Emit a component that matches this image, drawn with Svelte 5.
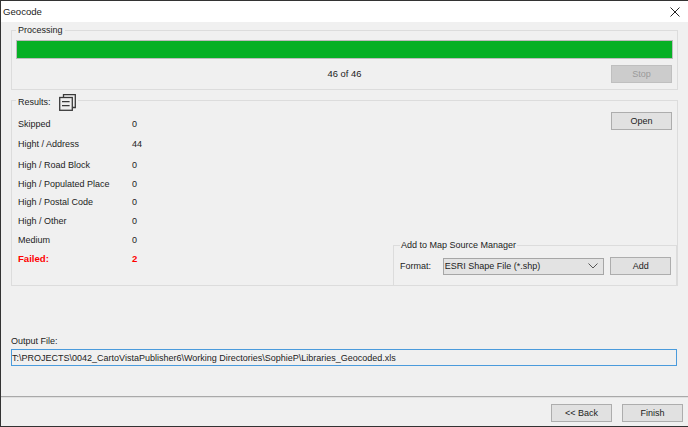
<script>
  const rows = [
    ['Skipped', '0'],
    ['Hight / Address', '44'],
    ['High / Road Block', '0'],
    ['High / Populated Place', '0'],
    ['High / Postal Code', '0'],
    ['High / Other', '0'],
    ['Medium', '0'],
  ];
</script>

<div class="window">
  <header class="titlebar">
    <span class="title">Geocode</span>
    <svg class="close" width="12" height="12" viewBox="0 0 12 12" aria-label="Close">
      <path d="M1.5 1.5 L10.5 10.5 M10.5 1.5 L1.5 10.5" stroke="#222" stroke-width="1" fill="none" />
    </svg>
  </header>

  <main class="content">
    <fieldset class="group processing">
      <legend>Processing</legend>
      <div class="bar"></div>
      <div class="status">
        <span class="count">46 of 46</span>
        <button class="btn disabled" disabled>Stop</button>
      </div>
    </fieldset>

    <fieldset class="group results">
      <legend class="results-legend">
        <span class="results-label">Results:</span>
        <svg class="results-icon" width="17" height="17" viewBox="0 0 17 17" fill="none" stroke="#3a3a3a" stroke-width="1.3">
          <path d="M4.5 3 V0.7 H16.3 V13.5 H13.8" />
          <rect x="0.7" y="3.5" width="12.6" height="12.8" />
          <path d="M3 7.7 H10.6 M3 11.7 H10.6" stroke-width="1.3" />
        </svg>
      </legend>
      <div class="results-body">
        <div class="stats">
          {#each rows as [label, value]}
            <span>{label}</span><span>{value}</span>
          {/each}
          <span class="failed">Failed:</span><span class="failed">2</span>
        </div>
        <div class="side">
          <button class="btn open">Open</button>
          <fieldset class="group add">
            <legend>Add to Map Source Manager</legend>
            <div class="add-row">
              <span class="format">Format:</span>
              <div class="select">
                <span>ESRI Shape File (*.shp)</span>
                <svg width="10" height="6" viewBox="0 0 10 6" fill="none" stroke="#555" stroke-width="1">
                  <path d="M0.5 0.5 L5 5 L9.5 0.5" />
                </svg>
              </div>
              <button class="btn add-btn">Add</button>
            </div>
          </fieldset>
        </div>
      </div>
    </fieldset>

    <section class="output">
      <label for="output-file">Output File:</label>
      <input id="output-file" type="text" readonly value="T:\PROJECTS\0042_CartoVistaPublisher6\Working Directories\SophieP\Libraries_Geocoded.xls" />
    </section>
  </main>

  <footer class="footer">
    <button class="btn">&lt;&lt; Back</button>
    <button class="btn">Finish</button>
  </footer>
</div>

<style>
  :global(body) {
    margin: 0;
    background: #f0f0f0;
  }
  .window {
    box-sizing: border-box;
    width: 688px;
    height: 427px;
    display: flex;
    flex-direction: column;
    border-top: 1px solid #333;
    border-left: 1px solid #333;
    border-bottom: 1px solid #333;
    background: #f0f0f0;
    font-family: "Liberation Sans", Arial, sans-serif;
    font-size: 9px;
    color: #1c1c1c;
    overflow: hidden;
  }
  .titlebar {
    height: 21px;
    flex: none;
    background: #fff;
    display: flex;
    align-items: center;
    justify-content: space-between;
    padding: 0 7px 0 2px;
    font-size: 9.6px;
  }
  .content {
    flex: 1;
    padding: 0 10px;
    display: flex;
    flex-direction: column;
    min-height: 0;
  }
  .group {
    box-sizing: border-box;
    margin: 0;
    min-width: 0;
    border: 1px solid #dcdcdc;
    padding: 0;
  }
  legend {
    padding: 1px 2px 0;
    margin-left: 0;
    line-height: 13px;
  }
  .processing {
    margin-top: 1px;
    height: 67px;
    padding: 0 4px;
  }
  .bar {
    height: 19px;
    margin-top: 3px;
    background: #06b025;
    border: 1px solid #bcbcbc;
    box-sizing: border-box;
  }
  .status {
    position: relative;
    display: flex;
    justify-content: flex-end;
    padding: 6px 1px 0 0;
  }
  .count {
    position: absolute;
    left: 0;
    right: 0;
    top: 9px;
    text-align: center;
    font-size: 9.4px;
  }
  .btn {
    box-sizing: border-box;
    width: 61px;
    height: 18px;
    padding: 0;
    border: 1px solid #adadad;
    background: #e1e1e1;
    font: inherit;
    color: #1c1c1c;
  }
  .btn.disabled {
    background: #cccccc;
    border-color: #bfbfbf;
    color: #9a9a9a;
  }
  .results {
    margin-top: 2px;
    height: 194px;
    display: block;
    position: relative;
  }
  .results-legend {
    display: flex;
    align-items: center;
    gap: 8px;
    margin-left: 4px;
    padding: 0 2px;
    height: 17px;
  }
  .results-label {
    margin-top: 4px;
  }
  .results-icon {
    margin-top: 4px;
    flex: none;
  }
  .results-body {
    display: flex;
    justify-content: space-between;
    height: 176px;
  }
  .stats {
    display: grid;
    grid-template-columns: 114px auto;
    grid-template-rows: 19px 21px 21px 17px 19px 19px 19px 19px;
    align-items: center;
    justify-items: start;
    padding: 5px 0 0 6px;
    align-content: start;
  }
  .failed {
    color: #f00;
    font-weight: bold;
    font-size: 9.6px;
  }
  .side {
    display: flex;
    flex-direction: column;
    align-items: flex-end;
    justify-content: space-between;
    padding-top: 3px;
    width: 284px;
  }
  .open {
    margin-right: 5px;
  }
  .add {
    width: 284px;
    height: 47px;
    border-bottom: none;
    padding: 0 5px 0 6px;
  }
  .add legend {
    padding: 1px 1px 0;
  }
  .add-row {
    display: flex;
    align-items: center;
    gap: 10px;
    margin-top: 5px;
  }
  .format {
    width: 34px;
  }
  .select {
    box-sizing: border-box;
    width: 163px;
    height: 17px;
    margin-left: -1px;
    background: #e3e3e3;
    border: 1px solid #a6a6a6;
    display: flex;
    align-items: center;
    justify-content: space-between;
    padding: 0 5px 0 1px;
  }
  .add-btn {
    margin-left: -4px;
  }
  .output {
    margin-top: 49px;
    display: flex;
    flex-direction: column;
    gap: 1px;
  }
  .output label {
    line-height: 13px;
  }
  .output input {
    box-sizing: border-box;
    width: 666px;
    height: 17px;
    margin: 0;
    padding: 0;
    border: 1px solid #4a9bdc;
    background: #f0f0f0;
    font: inherit;
    color: #1c1c1c;
    outline: none;
  }
  .footer {
    flex: none;
    height: 30px;
    box-sizing: border-box;
    border-top: 1px solid #a9a9a9;
    box-shadow: inset 0 1px 0 #e0e0e0;
    display: flex;
    justify-content: flex-end;
    gap: 10px;
    padding: 7px 5px 0 0;
  }
</style>
